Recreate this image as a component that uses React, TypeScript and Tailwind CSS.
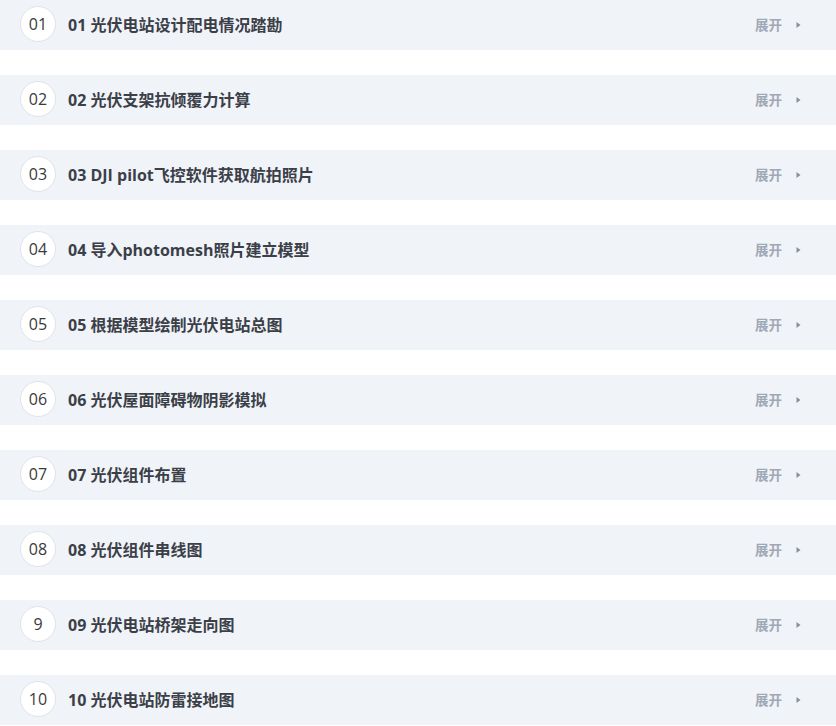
import React from "react";

const items = [
  { n: "01", t: "01 光伏电站设计配电情况踏勘" },
  { n: "02", t: "02 光伏支架抗倾覆力计算" },
  { n: "03", t: "03 DJI pilot飞控软件获取航拍照片" },
  { n: "04", t: "04 导入photomesh照片建立模型" },
  { n: "05", t: "05 根据模型绘制光伏电站总图" },
  { n: "06", t: "06 光伏屋面障碍物阴影模拟" },
  { n: "07", t: "07 光伏组件布置" },
  { n: "08", t: "08 光伏组件串线图" },
  { n: "9", t: "09 光伏电站桥架走向图" },
  { n: "10", t: "10 光伏电站防雷接地图" },
];

export default function App() {
  return (
    <div
      className="w-[836px] flex flex-col gap-[25px] bg-white"
      style={{ fontFamily: '"Open Sans", "Noto Sans CJK SC", sans-serif' }}
    >
      {items.map((it) => (
        <div key={it.n} className="h-[50px] flex items-center bg-[#f0f3f8] pl-[20px] pr-[35px]">
          <div className="w-[36px] h-[36px] -mt-[2px] rounded-full bg-white border border-[#dfe3ea] flex items-center justify-center text-[16px] text-[#3a3a3a] font-normal">
            {it.n}
          </div>
          <div className="ml-[12px] text-[16px] font-bold text-[#3b3f48]">{it.t}</div>
          <div className="ml-auto flex items-center">
            <span className="text-[13.5px] font-bold text-[#a0a8b6]">展开</span>
            <svg className="ml-[14px]" width="5" height="8" viewBox="0 0 5 8">
              <path d="M0.5 1 L4.5 4 L0.5 7 Z" fill="#86909e" />
            </svg>
          </div>
        </div>
      ))}
    </div>
  );
}
